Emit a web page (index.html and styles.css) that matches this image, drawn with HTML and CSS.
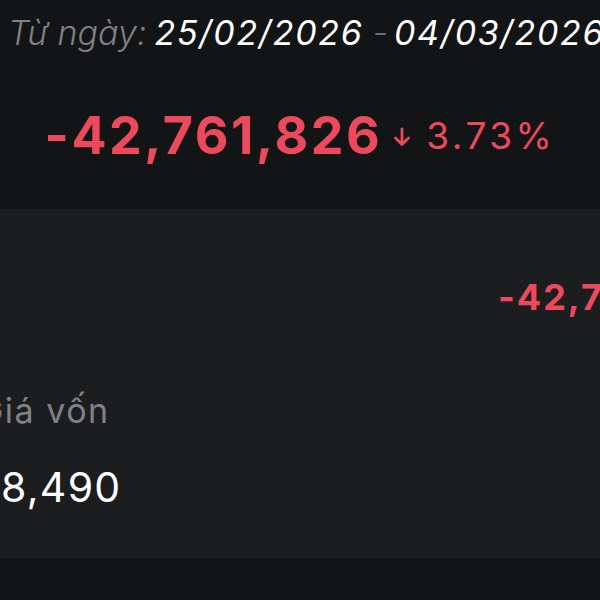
FILE: index.html
```html
<!DOCTYPE html>
<html lang="vi">
<head>
<meta charset="utf-8">
<link rel="stylesheet" href="styles.css">
</head>
<body>
<div class="screen">
  <section class="summary">
    <div class="range">
      <span class="range-label">Từ ngày:</span>
      <span class="range-date">25/02/2026</span>
      <span class="range-sep">-</span>
      <span class="range-date">04/03/2026</span>
    </div>
    <div class="total">
      <span class="total-value">-42,761,826</span>
      <span class="total-change">
        <svg class="arrow" width="20" height="22" viewBox="0 0 20 22" aria-hidden="true">
          <path d="M10 3 V18.5 M3.5 12 L10 18.5 L16.5 12" fill="none" stroke="#ec4a5c" stroke-width="2.8" stroke-linecap="round" stroke-linejoin="round"/>
        </svg>
        <span class="pct">3.73%</span>
      </span>
    </div>
  </section>
  <section class="panel">
    <div class="panel-row">
      <span class="pl-value">-42,761,826</span>
    </div>
    <div class="cost">
      <div class="cost-label">Giá vốn</div>
      <div class="cost-value">8,490</div>
    </div>
  </section>
  <div class="footer"></div>
</div>
</body>
</html>
```
FILE: styles.css
```css
* { box-sizing: border-box; }
html, body { margin: 0; padding: 0; }
body {
  background: #131416;
  font-family: Inter, "Liberation Sans", Arial, sans-serif;
  width: 600px;
  height: 600px;
  overflow: hidden;
}
.screen {
  width: 600px;
  height: 600px;
  overflow: hidden;
  display: flex;
  flex-direction: column;
}
.summary {
  height: 209px;
  flex: none;
  background: #131416;
  padding-top: 13px;
}
.range {
  display: flex;
  align-items: baseline;
  padding-left: 8px;
  font-size: 34px;
  font-style: italic;
  line-height: 40px;
  white-space: nowrap;
}
.range-label { color: #7f8186; font-weight: 300; letter-spacing: 0; }
.range-sep { color: #6d6f74; font-weight: 300; margin-left: 9px; }
.range-date { color: #ffffff; font-weight: 400; letter-spacing: 1.7px; }
.range-label + .range-date { margin-left: 8px; }
.range-sep + .range-date { margin-left: 6px; }
.total {
  margin-top: 53px;
  display: flex;
  justify-content: center;
  align-items: center;
  gap: 10px;
  color: #ec4a5c;
  line-height: 60px;
  white-space: nowrap;
}
.total-value {
  font-size: 52px;
  font-weight: 700;
  letter-spacing: 2.5px;
}
.total-change {
  display: flex;
  align-items: center;
  gap: 14px;
}
.arrow { display: block; margin-top: 1px; }
.pct {
  font-size: 37px;
  font-weight: 400;
  letter-spacing: 3.5px;
  line-height: 60px;
}
.panel {
  height: 349px;
  flex: none;
  background: #1c1d1f;
  overflow: hidden;
  padding-top: 68px;
}
.panel-row {
  padding-left: 498px;
  white-space: nowrap;
  line-height: 40px;
}
.pl-value {
  color: #ec4a5c;
  font-size: 36px;
  font-weight: 700;
  letter-spacing: 2px;
}
.cost {
  margin-top: 67px;
}
.cost-label {
  margin-left: -22px;
  color: #808287;
  font-size: 34px;
  font-weight: 400;
  line-height: 40px;
  letter-spacing: 1.5px;
  white-space: nowrap;
}
.cost-value {
  margin-top: 32px;
  padding-left: 1px;
  color: #ffffff;
  font-size: 41px;
  font-weight: 400;
  line-height: 48px;
  letter-spacing: 1.3px;
}
.footer {
  flex: 1;
  background: #131416;
}
```
